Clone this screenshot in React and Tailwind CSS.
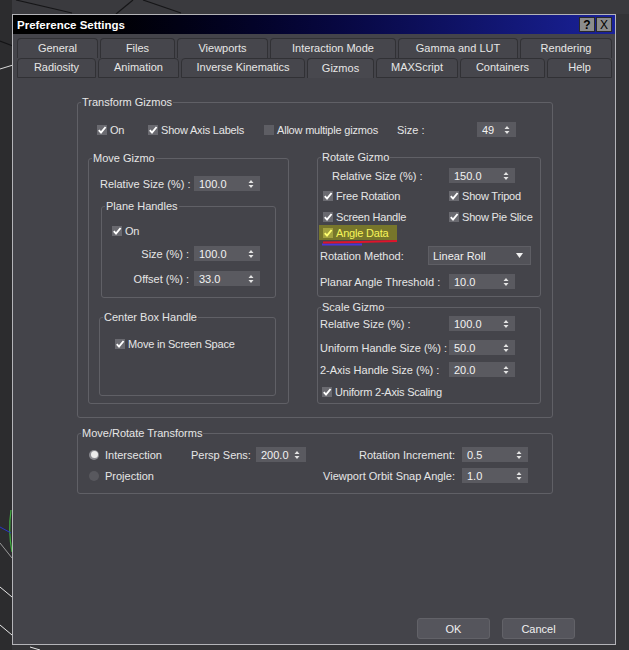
import React from "react";

const Arrows = () => (
  <svg width="6" height="10" viewBox="0 0 6 10" className="shrink-0">
    <path d="M0.5 4 L3 1 L5.5 4 Z M0.5 6 L3 9 L5.5 6 Z" fill="#e4e4e4" />
  </svg>
);

function Spin({ v, w }) {
  return (
    <div className={`${w} h-[15px] shrink-0 bg-[#5a5a60] flex items-center justify-between pl-[5px] pr-[6px] text-[#f2f2f2]`}>
      <span>{v}</span>
      <Arrows />
    </div>
  );
}

function Check({ on = true, label, hl = false }) {
  return (
    <div className="flex items-center gap-[3px] whitespace-nowrap">
      <span
        className={`w-[10px] h-[10px] shrink-0 flex items-center justify-center ${
          hl ? "bg-[#a3a23e]" : on ? "bg-[#6a6a70]" : "bg-[#5e5e64]"
        }`}
      >
        {on && (
          <svg width="10" height="10" viewBox="0 0 10 10">
            <path d="M1.8 5.2 L4 7.6 L8.6 2" fill="none" stroke={hl ? "#ffff70" : "#ffffff"} strokeWidth="1.9" />
          </svg>
        )}
      </span>
      <span className={`tracking-[-0.2px] ${hl ? "text-[#f6f55a]" : ""}`}>{label}</span>
    </div>
  );
}

function Radio({ on, label }) {
  return (
    <div className="flex items-center gap-[6px] whitespace-nowrap">
      <span className={`w-[10px] h-[10px] rounded-full shrink-0 flex items-center justify-center ${on ? "bg-[#8a8a90]" : "bg-[#58585e]"}`}>
        {on && <span className="w-[7px] h-[7px] rounded-full bg-[#ececec]" />}
      </span>
      <span>{label}</span>
    </div>
  );
}

function GLabel({ children }) {
  return <div className="-mt-[8px] ml-[3px] px-[1px] w-fit h-[14px] bg-[#44444a] whitespace-nowrap">{children}</div>;
}

function Tab({ w, label, active, bottom }) {
  return (
    <div
      className={`${w} h-[20px] shrink-0 flex items-center justify-center pb-[2px] rounded-t-[4px] border-t border-l border-r border-[#313135] ${
        bottom && !active ? "border-b" : ""
      } ${active ? "bg-[#48484e]" : "bg-[#46464c]"} text-[#e6e6e6]`}
    >
      {label}
    </div>
  );
}

export default function App() {
  return (
    <div className="relative w-[629px] h-[650px] overflow-hidden bg-[#343437] font-['Liberation_Sans',Arial,sans-serif] text-[11px] leading-[14px] text-[#e6e6e6]">
      <svg className="absolute inset-0 z-0" width="629" height="650" viewBox="0 0 629 650">
        <rect x="0" y="0" width="629" height="14" fill="#3a3a3e" />
        <rect x="0" y="0" width="12" height="650" fill="#2c2c2e" />
        <path d="M16 0 L72 13" stroke="#161618" strokeWidth="1.2" />
        <path d="M116 14 L133 0" stroke="#161618" strokeWidth="1.2" />
        <path d="M143 0 L181 13" stroke="#161618" strokeWidth="1.2" />
        <path d="M0 41 L13 46" stroke="#141416" strokeWidth="1.2" />
        <path d="M0 69 L13 65" stroke="#d8d8d8" strokeWidth="1" />
        <path d="M11 510 Q8 531 12 552" stroke="#3fae3f" fill="none" strokeWidth="1.2" />
        <path d="M0 527 L11 533" stroke="#2a36c8" strokeWidth="1" />
        <path d="M0 543 L12 558" stroke="#9a9a9a" strokeWidth="1" />
        <path d="M0 587 L12 597" stroke="#e8e8e8" strokeWidth="1" />
        <path d="M0 625 L12 635" stroke="#e8e8e8" strokeWidth="1" />
        <path d="M30 647 L40 650" stroke="#e8e8e8" strokeWidth="1" />
      </svg>

      <div className="relative z-10 ml-[12px] mt-[14px] w-[604px] h-[631px] border border-[#b4b4b8] bg-[#44444a] flex flex-col">
        {/* Title bar */}
        <div className="h-[19px] shrink-0 flex items-center justify-between pl-[4px] pr-[3px] bg-linear-to-r from-[#000000] via-[#06063a] to-[#1a229a]">
          <span className="font-bold text-[11.5px] text-white">Preference Settings</span>
          <div className="flex gap-[1px]">
            <div className="w-[16px] h-[15px] bg-[#8c8c8c] border border-[#2a2a2a] flex items-center justify-center text-black font-bold text-[12px] leading-none">?</div>
            <div className="w-[16px] h-[15px] bg-[#8c8c8c] border border-[#2a2a2a] flex items-center justify-center text-black text-[12px] leading-none">X</div>
          </div>
        </div>

        {/* Tabs */}
        <div className="mt-[4px] pl-[4px] flex flex-col">
          <div className="flex gap-[2px]">
            <Tab w="w-[81px]" label="General" />
            <Tab w="w-[75px]" label="Files" />
            <Tab w="w-[91px]" label="Viewports" />
            <Tab w="w-[126px]" label="Interaction Mode" />
            <Tab w="w-[120px]" label="Gamma and LUT" />
            <Tab w="w-[92px]" label="Rendering" />
          </div>
          <div className="flex gap-[2px]">
            <Tab w="w-[79px]" label="Radiosity" bottom />
            <Tab w="w-[81px]" label="Animation" bottom />
            <Tab w="w-[124px]" label="Inverse Kinematics" bottom />
            <Tab w="w-[67px]" label="Gizmos" active bottom />
            <Tab w="w-[82px]" label="MAXScript" bottom />
            <Tab w="w-[85px]" label="Containers" bottom />
            <Tab w="w-[65px]" label="Help" bottom />
          </div>
        </div>

        {/* Transform Gizmos */}
        <div className="mt-[24px] ml-[64px] w-[476px] h-[316px] shrink-0 border border-[#606066] rounded-[3px] flex flex-col">
          <GLabel>Transform Gizmos</GLabel>
          <div className="mt-[13px] h-[15px] pl-[19px] flex items-center">
            <div className="w-[51px]"><Check label="On" /></div>
            <div className="w-[116px]"><Check label="Show Axis Labels" /></div>
            <div className="w-[133px]"><Check on={false} label="Allow multiple gizmos" /></div>
            <div className="w-[80px]">Size :</div>
            <Spin w="w-[39px]" v="49" />
          </div>

          <div className="flex items-start">
            {/* Move Gizmo */}
            <div className="mt-[21px] ml-[10px] w-[201px] h-[246px] shrink-0 border border-[#606066] rounded-[3px] flex flex-col">
              <GLabel>Move Gizmo</GLabel>
              <div className="mt-[11px] h-[15px] pl-[11px] flex items-center">
                <div className="w-[94px] whitespace-nowrap">Relative Size (%) :</div>
                <Spin w="w-[66px]" v="100.0" />
              </div>

              <div className="mt-[15px] ml-[12px] w-[175px] h-[92px] border border-[#606066] rounded-[3px] flex flex-col">
                <GLabel>Plane Handles</GLabel>
                <div className="mt-[10px] h-[15px] pl-[10px] flex items-center">
                  <Check label="On" />
                </div>
                <div className="mt-[8px] h-[15px] flex items-center">
                  <div className="w-[92px] pr-[5px] text-right whitespace-nowrap">Size (%) :</div>
                  <Spin w="w-[66px]" v="100.0" />
                </div>
                <div className="mt-[10px] h-[15px] flex items-center">
                  <div className="w-[92px] pr-[5px] text-right whitespace-nowrap">Offset (%) :</div>
                  <Spin w="w-[66px]" v="33.0" />
                </div>
              </div>

              <div className="mt-[19px] ml-[10px] w-[177px] h-[79px] border border-[#606066] rounded-[3px] flex flex-col">
                <GLabel>Center Box Handle</GLabel>
                <div className="mt-[12px] h-[15px] pl-[15px] flex items-center">
                  <Check label="Move in Screen Space" />
                </div>
              </div>
            </div>

            {/* Right column */}
            <div className="ml-[28px] flex flex-col">
              <div className="mt-[20px] w-[224px] h-[140px] border border-[#606066] rounded-[3px] flex flex-col">
                <GLabel>Rotate Gizmo</GLabel>
                <div className="mt-[4px] h-[15px] pl-[14px] flex items-center">
                  <div className="w-[117px] whitespace-nowrap">Relative Size (%) :</div>
                  <Spin w="w-[66px]" v="150.0" />
                </div>
                <div className="mt-[5px] h-[15px] pl-[5px] flex items-center">
                  <div className="w-[126px]"><Check label="Free Rotation" /></div>
                  <Check label="Show Tripod" />
                </div>
                <div className="mt-[6px] h-[15px] pl-[5px] flex items-center">
                  <div className="w-[126px]"><Check label="Screen Handle" /></div>
                  <Check label="Show Pie Slice" />
                </div>
                <div className="relative mt-[1px] h-[15px] pl-[1px] flex items-center">
                  <div className="h-[15px] w-[78px] pl-[4px] bg-[#77762b] flex items-center">
                    <Check label="Angle Data" hl />
                  </div>
                  <svg className="absolute left-0 top-0" width="100" height="24" viewBox="0 0 100 24">
                    <path d="M4 19.5 L44 19.5" stroke="#4a35d8" strokeWidth="2" fill="none" />
                    <path d="M5 17.5 Q40 17 79 16" stroke="#e0142a" strokeWidth="2" fill="none" />
                  </svg>
                </div>
                <div className="mt-[6px] h-[19px] pl-[2px] flex items-center">
                  <div className="w-[108px] whitespace-nowrap">Rotation Method:</div>
                  <div className="w-[103px] h-[19px] bg-[#525258] border border-[#5e5e64] flex items-center justify-between pl-[4px] pr-[7px] text-[#f0f0f0]">
                    <span>Linear Roll</span>
                    <svg width="7" height="5" viewBox="0 0 7 5"><path d="M0 0 L7 0 L3.5 5 Z" fill="#f0f0f0" /></svg>
                  </div>
                </div>
                <div className="mt-[9px] h-[15px] pl-[2px] flex items-center">
                  <div className="w-[129px] whitespace-nowrap">Planar Angle Threshold :</div>
                  <Spin w="w-[66px]" v="10.0" />
                </div>
              </div>

              <div className="mt-[10px] w-[224px] h-[97px] border border-[#606066] rounded-[3px] flex flex-col">
                <GLabel>Scale Gizmo</GLabel>
                <div className="mt-[2px] h-[15px] pl-[2px] flex items-center">
                  <div className="w-[129px] whitespace-nowrap">Relative Size (%) :</div>
                  <Spin w="w-[66px]" v="100.0" />
                </div>
                <div className="mt-[9px] h-[15px] pl-[2px] flex items-center">
                  <div className="w-[129px] whitespace-nowrap">Uniform Handle Size (%) :</div>
                  <Spin w="w-[66px]" v="50.0" />
                </div>
                <div className="mt-[7px] h-[15px] pl-[2px] flex items-center">
                  <div className="w-[129px] whitespace-nowrap">2-Axis Handle Size (%) :</div>
                  <Spin w="w-[66px]" v="20.0" />
                </div>
                <div className="mt-[7px] h-[15px] pl-[4px] flex items-center">
                  <Check label="Uniform 2-Axis Scaling" />
                </div>
              </div>
            </div>
          </div>
        </div>

        {/* Move/Rotate Transforms */}
        <div className="mt-[15px] ml-[64px] w-[476px] h-[61px] shrink-0 border border-[#606066] rounded-[3px] flex flex-col">
          <GLabel>Move/Rotate Transforms</GLabel>
          <div className="mt-[7px] h-[15px] pl-[11px] flex items-center">
            <div className="w-[102px]"><Radio on label="Intersection" /></div>
            <div className="w-[65px] whitespace-nowrap">Persp Sens:</div>
            <Spin w="w-[50px]" v="200.0" />
            <div className="w-[149px] text-right whitespace-nowrap">Rotation Increment:</div>
            <div className="ml-[7px]"><Spin w="w-[66px]" v="0.5" /></div>
          </div>
          <div className="mt-[6px] h-[15px] pl-[11px] flex items-center">
            <div className="w-[102px]"><Radio label="Projection" /></div>
            <div className="w-[264px] text-right whitespace-nowrap">Viewport Orbit Snap Angle:</div>
            <div className="ml-[7px]"><Spin w="w-[66px]" v="1.0" /></div>
          </div>
        </div>

        {/* Buttons */}
        <div className="mt-[124px] pr-[40px] flex justify-end gap-[12px]">
          <div className="w-[73px] h-[21px] rounded-[3px] bg-[#55555c] border border-[#626268] flex items-center justify-center text-[#f0f0f0]">OK</div>
          <div className="w-[73px] h-[21px] rounded-[3px] bg-[#55555c] border border-[#626268] flex items-center justify-center text-[#f0f0f0]">Cancel</div>
        </div>
      </div>
    </div>
  );
}
